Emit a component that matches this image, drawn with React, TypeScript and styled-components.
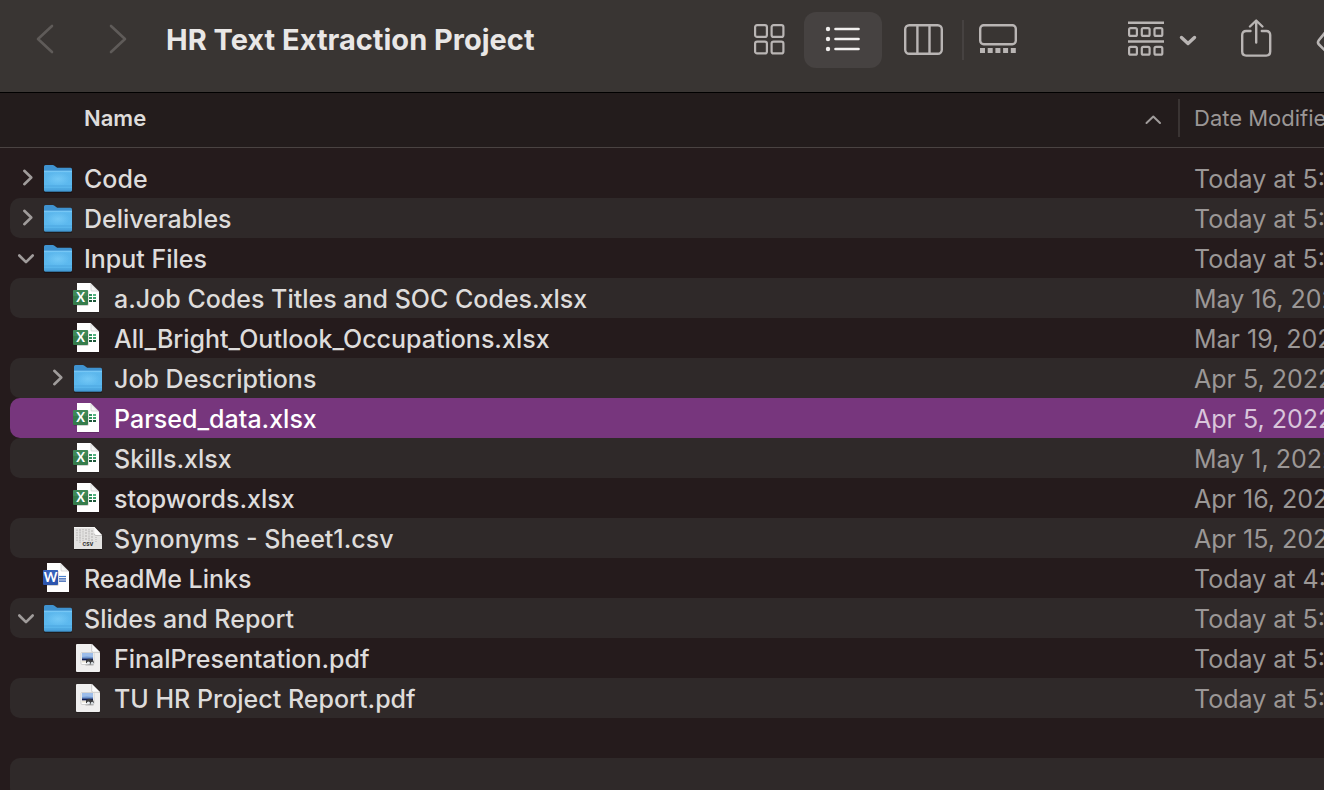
import React from "react";
import styled, { createGlobalStyle } from "styled-components";

const GlobalStyle = createGlobalStyle`
  *, *::before, *::after { box-sizing: border-box; }
  body {
    margin: 0;
    background: #251b1c;
    color: #dedcdb;
    font-family: Inter, "Liberation Sans", sans-serif;
  }
  button {
    border: 0;
    padding: 0;
    background: none;
    color: inherit;
    font: inherit;
  }
`;

const Window = styled.div`
  display: flex;
  flex-direction: column;
  height: 100vh;
  overflow: hidden;
`;

const Toolbar = styled.header`
  display: flex;
  flex: none;
  align-items: center;
  height: 93px;
  padding: 0 0 12px 20px;
  overflow: hidden;
  background: #393533;
  border-bottom: 1px solid #000;
  color: #b9b5b4;
`;

const NavButton = styled.button`
  display: flex;
  justify-content: center;
  width: 50px;
  margin-right: 23px;
  color: #5f5b59;
`;

const Title = styled.h1`
  flex: 1;
  min-width: 0;
  margin: 0;
  overflow: hidden;
  color: #e9e7e6;
  font-size: 29px;
  font-weight: 700;
  line-height: 40px;
  white-space: nowrap;
`;

const ViewSwitch = styled.div`
  display: flex;
  align-items: center;
  margin-right: 84px;
`;

const ToolButton = styled.button<{ $width: number; $active?: boolean }>`
  display: flex;
  flex: none;
  align-items: center;
  justify-content: center;
  width: ${(p) => p.$width}px;
  height: 56px;
  border-radius: 12px;
  background: ${(p) => (p.$active ? "#464241" : "none")};
  color: ${(p) => (p.$active ? "#f1efee" : "inherit")};
`;

const ToolDivider = styled.span`
  width: 2px;
  height: 40px;
  background: #464241;
`;

const ClippedTool = styled.div`
  width: 8px;
  margin-left: 12px;
  overflow: hidden;
`;

const Table = styled.table`
  width: 100%;
  flex: none;
  table-layout: fixed;
  border-collapse: separate;
  border-spacing: 0;
  tbody::before {
    content: "";
    display: block;
    height: 10px;
  }
`;

const HeadCell = styled.th<{ $date?: boolean }>`
  width: ${(p) => (p.$date ? "146px" : "auto")};
  height: 55px;
  padding: 0 0 4px;
  overflow: hidden;
  background: #231c1c;
  border-bottom: 1px solid #4a4342;
  color: ${(p) => (p.$date ? "#9b9796" : "#dedcdb")};
  font-size: 22px;
  font-weight: ${(p) => (p.$date ? 400 : 600)};
  text-align: left;
  white-space: nowrap;
`;

const HeadLabel = styled.button<{ $date?: boolean }>`
  display: flex;
  align-items: center;
  justify-content: space-between;
  width: 100%;
  height: 38px;
  padding: ${(p) => (p.$date ? "0 0 0 14px" : "0 16px 0 84px")};
  border-left: ${(p) => (p.$date ? "2px solid #3a3433" : "0")};
`;

type Tone = "plain" | "stripe" | "selected";
const rowColors: Record<Tone, string> = {
  plain: "transparent",
  stripe: "#2f2929",
  selected: "#77367d",
};

const NameCell = styled.td`
  padding: 0 0 0 10px;
`;

const NameContent = styled.div<{ $tone: Tone; $depth: number }>`
  display: flex;
  align-items: center;
  height: 40px;
  padding-left: ${(p) => 4 + p.$depth * 30}px;
  border-radius: 10px 0 0 10px;
  background: ${(p) => rowColors[p.$tone]};
  color: ${(p) => (p.$tone === "selected" ? "#ffffff" : "#dedcdb")};
`;

const Disclosure = styled.button`
  display: flex;
  width: 28px;
  color: #a09c9b;
`;

const DisclosureSpace = styled.span`
  width: 28px;
`;

const IconSlot = styled.span`
  display: flex;
  width: 32px;
  margin-right: 10px;
`;

const FileName = styled.span`
  padding-top: 2px;
  font-size: 25px;
  font-weight: 500;
  line-height: 38px;
  white-space: nowrap;
`;

const DateCell = styled.td<{ $tone: Tone }>`
  height: 40px;
  padding: 2px 0 0 16px;
  overflow: hidden;
  background: ${(p) => rowColors[p.$tone]};
  color: ${(p) => (p.$tone === "selected" ? "#d9c5db" : "#9b9796")};
  font-size: 25px;
  line-height: 38px;
  white-space: nowrap;
  text-overflow: clip;
`;

const EmptyRows = styled.div`
  flex: 1;
  min-height: 0;
  margin-left: 10px;
  overflow: hidden;
`;

const EmptyRow = styled.div<{ $tone: Tone }>`
  height: 40px;
  border-radius: 10px 0 0 10px;
  background: ${(p) => rowColors[p.$tone]};
`;

type Kind = "folder" | "excel" | "word" | "csv" | "pdf";

const FolderIcon = () => (
  <svg width="32" height="40" viewBox="0 0 32 40" aria-hidden="true">
    <defs>
      <linearGradient id="folderFront" x1="0" y1="0" x2="0" y2="1">
        <stop offset="0" stopColor="#62bdf1" />
        <stop offset="0.12" stopColor="#5bb6ec" />
        <stop offset="0.75" stopColor="#5cb9ef" />
        <stop offset="1" stopColor="#4aa3dc" />
      </linearGradient>
      <radialGradient id="folderGlow">
        <stop offset="0" stopColor="#7fd0fa" stopOpacity="0.7" />
        <stop offset="1" stopColor="#7fd0fa" stopOpacity="0" />
      </radialGradient>
    </defs>
    <path d="M2 34h28v1H2z" fill="#000" opacity=".3" />
    <path d="M2 8.5Q2 7 3.5 7h7.2q1 0 1.8.7l2 1.6q.7.5 1.6.5h12.4q1.5 0 1.5 1.5V20H2z" fill="#3f93d0" />
    <path d="M2 13.2h28V32q0 1.6-1.6 1.6H3.6Q2 33.6 2 32z" fill="url(#folderFront)" />
    <ellipse cx="16" cy="21" rx="12" ry="7" fill="url(#folderGlow)" />
    <path d="M2 12.7h28v1H2z" fill="#85d0fb" />
    <path d="M2 28h28M2 31h28" stroke="#3d93cf" strokeWidth=".8" opacity=".6" />
    <path d="M3 33.2h26" stroke="#2f7db8" strokeWidth=".8" />
  </svg>
);

const OfficePage = ({ letter, dark, light }: { letter: string; dark: string; light: string }) => (
  <svg width="32" height="40" viewBox="0 0 32 40" aria-hidden="true">
    <path d="M5 33.5h22v1H5z" fill="#000" opacity=".35" />
    <path d="M5 5h13.5L27 13.5V34H5z" fill="#fff" />
    <path d="M18.5 5v7q0 1.5 1.5 1.5h7z" fill="#dcdcdc" />
    <path d="M19.6 7.6v4q0 1 1 1h4z" fill="#f7f7f7" />
    {letter === "X" ? (
      <g>
        <path d="M17 16h3v2h-3zM17 19h3v2h-3z" fill="#349563" />
        <path d="M21 16h3v2h-3z" fill="#55b582" />
        <path d="M21 19h3v2h-3z" fill="#3ea36d" />
        <path d="M17 22h3v2h-3zM21 22h3v2h-3z" fill="#1c573a" />
      </g>
    ) : (
      <g>
        <path d="M17 18.5h7" stroke="#4c83d0" strokeWidth="1.2" />
        <path d="M17 20.8h7M17 23.1h7" stroke="#2857ad" strokeWidth="1.2" />
      </g>
    )}
    <rect x="1.5" y="12.5" width="15" height="15.3" rx="1" fill="#000" opacity=".22" />
    <rect x="1" y="12" width="15" height="15" rx="1" fill={dark} />
    <rect x="1" y="12" width="15" height="6" rx="1" fill={light} opacity=".45" />
    <text
      x="8.5"
      y="24"
      textAnchor="middle"
      fill="#fff"
      fontFamily="Lato, sans-serif"
      fontWeight="700"
      fontSize="13"
    >
      {letter}
    </text>
  </svg>
);

const CsvIcon = () => (
  <svg width="32" height="40" viewBox="0 0 32 40" aria-hidden="true">
    <path d="M2 31h28v1H2z" fill="#000" opacity=".4" />
    <path d="M2 9h20.5l7.5 8.5V31H2z" fill="#e3e2e1" />
    <path d="M2 9h20.5v1H2z" fill="#f6f5f4" />
    <g fill="none" stroke="#bab8b7" strokeWidth="1.2">
      <path d="M5 11.5v12" strokeDasharray="1.5 1" />
      <path d="M8 11v14" strokeDasharray="2 .6" />
      <path d="M11 11v12" strokeDasharray="1 .8" />
      <path d="M14 11v12" strokeDasharray="2 1" />
      <path d="M17 11v12" strokeDasharray="1.2 .6" />
      <path d="M20 12v11" strokeDasharray="2 1" />
      <path d="M24 19v5" strokeDasharray="1 1" />
    </g>
    <path d="M22.3 9v6.5q0 1.5 1.5 1.5H30z" fill="#fcfbfb" />
    <path d="M22 15.5q0 2 2 2h6" stroke="#b9b7b6" strokeWidth=".8" fill="none" />
    <text
      x="16"
      y="28"
      textAnchor="middle"
      fill="#333"
      fontFamily="Inter, sans-serif"
      fontWeight="800"
      fontSize="5"
    >
      CSV
    </text>
  </svg>
);

const PdfIcon = () => (
  <svg width="32" height="40" viewBox="0 0 32 40" aria-hidden="true">
    <path d="M4 33.5h24v1H4z" fill="#000" opacity=".4" />
    <path d="M4 7q0-1 1-1h14.5L28 14.5V33q0 1-1 1H5q-1 0-1-1z" fill="#f0efef" />
    <path d="M20 6v6.5Q20 14 21.5 14H28z" fill="#fbfbfb" />
    <path d="M19.7 6v6.8q0 1.5 1.5 1.5h6.6" stroke="#c4c3c3" strokeWidth=".8" fill="none" />
    <rect x="9" y="14.5" width="13" height="12" rx="1" fill="#fff" stroke="#c9c9c9" strokeWidth=".8" />
    <path d="M10 15h11v6H10z" fill="#9dbdea" />
    <path d="M10 19q4-1 11 0v1.6H10z" fill="#6f96cf" />
    <path d="M10 20.5h11v2.2H10z" fill="#111c57" />
    <path d="M10 22.5h5l2 2h-7z" fill="#e9e3d5" />
    <path d="M14 22l3-1.3 4 1.3 1 2.5-1 2h-5l-2-2z" fill="#3b3b3d" />
    <circle cx="16.4" cy="25" r="1.6" fill="#e9eef2" />
    <circle cx="20.2" cy="25.2" r="1.5" fill="#d9dee2" />
    <path d="M13.5 27h8" stroke="#a5a4a4" strokeWidth=".8" />
  </svg>
);

const FileIcon = ({ kind }: { kind: Kind }) => {
  if (kind === "folder") return <FolderIcon />;
  if (kind === "excel") return <OfficePage letter="X" dark="#347c4b" light="#4c9765" />;
  if (kind === "word") return <OfficePage letter="W" dark="#2c55ae" light="#4473c9" />;
  if (kind === "csv") return <CsvIcon />;
  return <PdfIcon />;
};

const Chevron = ({ open }: { open: boolean }) => (
  <svg width="26" height="40" viewBox="0 0 26 40" fill="none" stroke="currentColor" strokeWidth="2.6" strokeLinecap="round" strokeLinejoin="round" aria-hidden="true">
    <path d={open ? "M5.3 17.5l6.7 6.7 6.7-6.7" : "M10.3 12.8l7 6.7-7 6.7"} />
  </svg>
);

interface Entry {
  name: string;
  kind: Kind;
  date: string;
  depth?: number;
  open?: boolean;
  selected?: boolean;
}

const entries: Entry[] = [
  { name: "Code", kind: "folder", date: "Today at 5:" },
  { name: "Deliverables", kind: "folder", date: "Today at 5:" },
  { name: "Input Files", kind: "folder", date: "Today at 5:", open: true },
  { name: "a.Job Codes Titles and SOC Codes.xlsx", kind: "excel", date: "May 16, 2022", depth: 1 },
  { name: "All_Bright_Outlook_Occupations.xlsx", kind: "excel", date: "Mar 19, 2022", depth: 1 },
  { name: "Job Descriptions", kind: "folder", date: "Apr 5, 2022", depth: 1 },
  { name: "Parsed_data.xlsx", kind: "excel", date: "Apr 5, 2022", depth: 1, selected: true },
  { name: "Skills.xlsx", kind: "excel", date: "May 1, 2022", depth: 1 },
  { name: "stopwords.xlsx", kind: "excel", date: "Apr 16, 2022", depth: 1 },
  { name: "Synonyms - Sheet1.csv", kind: "csv", date: "Apr 15, 2022", depth: 1 },
  { name: "ReadMe Links", kind: "word", date: "Today at 4:" },
  { name: "Slides and Report", kind: "folder", date: "Today at 5:", open: true },
  { name: "FinalPresentation.pdf", kind: "pdf", date: "Today at 5:", depth: 1 },
  { name: "TU HR Project Report.pdf", kind: "pdf", date: "Today at 5:", depth: 1 },
];

const NavArrow = ({ back }: { back?: boolean }) => (
  <svg width="22" height="34" viewBox="0 0 22 34" fill="none" stroke="currentColor" strokeWidth="2.6" strokeLinecap="round" strokeLinejoin="round">
    <path d={back ? "M18 3L4 16l14 13" : "M4 3l14 13L4 29"} />
  </svg>
);

const GridIcon = () => (
  <svg width="32" height="34" viewBox="0 0 32 34" fill="none" stroke="currentColor" strokeWidth="2.2">
    <rect x="2.1" y="2.1" width="11.8" height="11.8" rx="2" />
    <rect x="18.6" y="2.1" width="11.8" height="11.8" rx="2" />
    <rect x="2.1" y="18.6" width="11.8" height="11.8" rx="2" />
    <rect x="18.6" y="18.6" width="11.8" height="11.8" rx="2" />
  </svg>
);

const ListIcon = () => (
  <svg width="36" height="34" viewBox="0 0 36 34" stroke="currentColor" fill="currentColor" strokeLinecap="round">
    {[6, 16, 26].map((y) => (
      <g key={y}>
        <circle cx="3" cy={y} r="2.2" stroke="none" />
        <path d={`M10.5 ${y}h23`} strokeWidth="2.6" />
      </g>
    ))}
  </svg>
);

const ColumnsIcon = () => (
  <svg width="42" height="34" viewBox="0 0 42 34" fill="none" stroke="currentColor" strokeWidth="2.4">
    <rect x="4.2" y="2.2" width="36.6" height="28.6" rx="4" />
    <path d="M16.4 2v29M28.5 2v29" />
  </svg>
);

const GalleryIcon = () => (
  <svg width="40" height="34" viewBox="0 0 40 34" fill="none" stroke="currentColor" strokeWidth="2.4">
    <rect x="2.2" y="2.2" width="35.6" height="19" rx="3.5" />
    <path d="M2 27.5h37" strokeWidth="5" strokeDasharray="5 2.7" />
  </svg>
);

const GroupIcon = () => (
  <svg width="72" height="40" viewBox="0 0 72 40" fill="none" stroke="currentColor" strokeWidth="2.2">
    <path d="M2 2.8h36M2 21.5h36" strokeWidth="2.4" />
    {[8.1, 26.9].map((y) =>
      [3.1, 15.8, 28.5].map((x) => <rect key={`${x}-${y}`} x={x} y={y} width="7.8" height="7.8" rx="1.5" />)
    )}
    <path d="M55.5 17.5l6.5 6 6.5-6" strokeWidth="3.4" strokeLinecap="round" strokeLinejoin="round" />
  </svg>
);

const ShareIcon = () => (
  <svg width="32" height="42" viewBox="0 0 32 42" fill="none" stroke="currentColor" strokeWidth="2.4" strokeLinecap="round" strokeLinejoin="round">
    <path d="M10.5 12H6.2q-4 0-4 4v16.6q0 4 4 4h20q4 0 4-4V16q0-4-4-4h-4.4" />
    <path d="M16.2 23.5V1.6M10 7.5l6.2-6 6.2 6" />
  </svg>
);

const TagIcon = () => (
  <svg width="36" height="34" viewBox="0 0 36 34" fill="none" stroke="currentColor" strokeWidth="2.6" strokeLinejoin="round">
    <path d="M12 6L3 17q-2 2.5 0 4.5l9 9h20V6z" />
  </svg>
);

const SortIcon = () => (
  <svg width="18" height="14" viewBox="0 0 18 14" fill="none" stroke="#a09c9b" strokeWidth="2" strokeLinecap="round" strokeLinejoin="round" aria-hidden="true">
    <path d="M2.5 12l6.8-6.5 6.7 6.5" />
  </svg>
);

export default function App() {
  return (
    <Window>
      <GlobalStyle />
      <Toolbar>
        <NavButton aria-label="Back" disabled><NavArrow back /></NavButton>
        <NavButton aria-label="Forward" disabled><NavArrow /></NavButton>
        <Title>HR Text Extraction Project</Title>
        <ViewSwitch>
          <ToolButton $width={70} aria-label="Icon view"><GridIcon /></ToolButton>
          <ToolButton $width={78} $active aria-label="List view" aria-pressed="true"><ListIcon /></ToolButton>
          <ToolButton $width={80} aria-label="Column view"><ColumnsIcon /></ToolButton>
          <ToolDivider />
          <ToolButton $width={68} aria-label="Gallery view"><GalleryIcon /></ToolButton>
        </ViewSwitch>
        <ToolButton $width={92} aria-label="Group items"><GroupIcon /></ToolButton>
        <ToolButton $width={96} aria-label="Share"><ShareIcon /></ToolButton>
        <ClippedTool>
          <ToolButton $width={36} aria-label="Edit tags"><TagIcon /></ToolButton>
        </ClippedTool>
      </Toolbar>
      <Table>
        <thead>
          <tr>
            <HeadCell scope="col" aria-sort="ascending">
              <HeadLabel>Name<SortIcon /></HeadLabel>
            </HeadCell>
            <HeadCell scope="col" $date>
              <HeadLabel $date>Date Modified</HeadLabel>
            </HeadCell>
          </tr>
        </thead>
        <tbody>
          {entries.map((entry, index) => {
            const tone: Tone = entry.selected ? "selected" : index % 2 ? "stripe" : "plain";
            return (
              <tr key={entry.name} aria-selected={!!entry.selected}>
                <NameCell>
                  <NameContent $tone={tone} $depth={entry.depth ?? 0}>
                    {entry.kind === "folder" ? (
                      <Disclosure aria-label={`Toggle ${entry.name}`} aria-expanded={!!entry.open}>
                        <Chevron open={!!entry.open} />
                      </Disclosure>
                    ) : (
                      <DisclosureSpace />
                    )}
                    <IconSlot><FileIcon kind={entry.kind} /></IconSlot>
                    <FileName>{entry.name}</FileName>
                  </NameContent>
                </NameCell>
                <DateCell $tone={tone}>{entry.date}</DateCell>
              </tr>
            );
          })}
        </tbody>
      </Table>
      <EmptyRows aria-hidden="true">
        <EmptyRow $tone="plain" />
        <EmptyRow $tone="stripe" />
      </EmptyRows>
    </Window>
  );
}
